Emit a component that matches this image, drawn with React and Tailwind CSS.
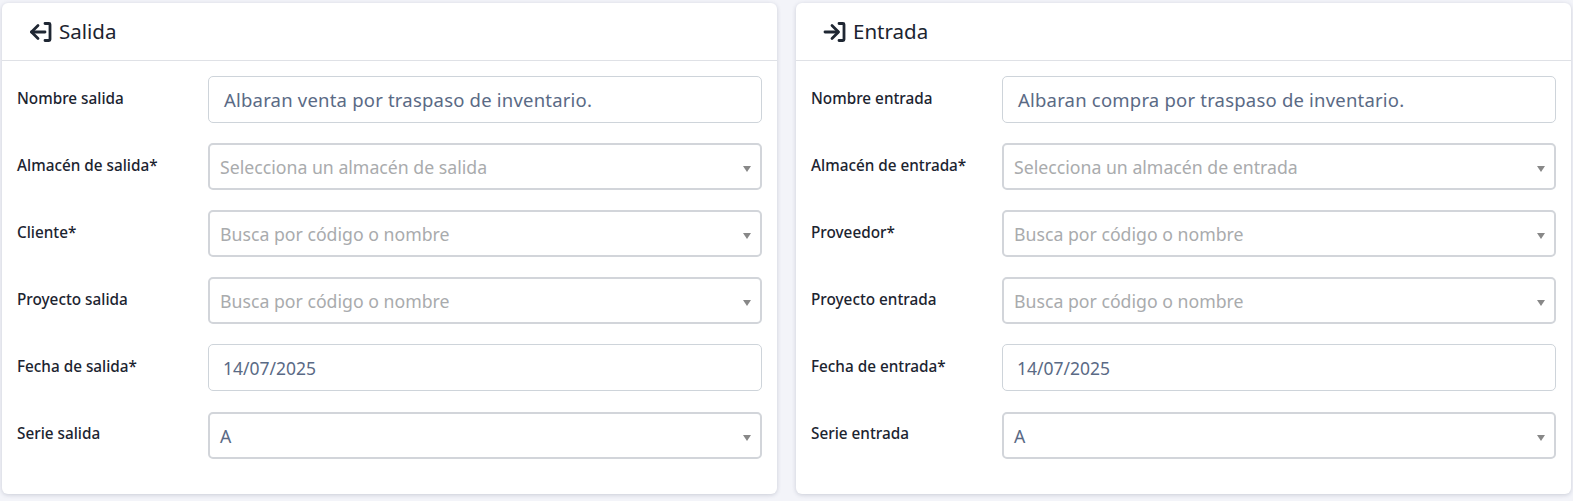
import React from 'react';

const ExitIcon = () => (
  <svg className="w-[24px] h-[24px] text-[#1f2733]" viewBox="0 0 24 24" fill="none" stroke="currentColor" strokeWidth="2.8" strokeLinecap="round" strokeLinejoin="round">
    <path d="M16 3.5h4a1 1 0 0 1 1 1v15a1 1 0 0 1-1 1h-4" />
    <path d="M16 12H2.5" />
    <path d="M9 5.5L2.5 12 9 18.5" />
  </svg>
);

const EnterIcon = () => (
  <svg className="w-[24px] h-[24px] text-[#1f2733]" viewBox="0 0 24 24" fill="none" stroke="currentColor" strokeWidth="2.8" strokeLinecap="round" strokeLinejoin="round">
    <path d="M16 3.5h4a1 1 0 0 1 1 1v15a1 1 0 0 1-1 1h-4" />
    <path d="M2 12h13" />
    <path d="M9 5.5l6.5 6.5L9 18.5" />
  </svg>
);

const TextField = ({ value, size }) => (
  <div className={`h-[47px] flex items-center bg-white border border-[#ced4da] rounded-[5px] text-[#5a6a85] ${size}`}>
    {value}
  </div>
);

const SelectField = ({ value, placeholder }) => (
  <div className="h-[47px] flex items-center justify-between pl-[10px] pr-[9px] bg-white border-2 border-[#d2d5da] rounded-[5px] text-[17.7px]">
    <span className={`pt-[2px] ${placeholder ? 'text-[#a9abad]' : 'text-[#5a6a85]'}`}>{value}</span>
    <span className="w-0 h-0 mt-[5px] border-l-[4px] border-r-[4px] border-t-[6px] border-l-transparent border-r-transparent border-t-[#888888]"></span>
  </div>
);

const Row = ({ label, last, children }) => (
  <div className={`grid grid-cols-[191px_554px] ${last ? 'h-[68px]' : 'h-[67px]'}`}>
    <label className="pt-[8px] text-[15.3px] font-medium leading-[28px] text-[#1c2430]">{label}</label>
    <div className={last ? 'pt-[1px]' : ''}>{children}</div>
  </div>
);

const Card = ({ icon, title, rows }) => (
  <div className="h-[491px] bg-white rounded-[6px] shadow-[0_1px_4px_rgba(60,70,100,0.22)]">
    <div className="h-[58px] flex items-center gap-[6px] pl-[27px] border-b border-[#dfe1e6]">
      {icon}
      <h3 className="text-[20.5px] text-[#1c2430]">{title}</h3>
    </div>
    <div className="pt-[15px] px-[15px]">
      {rows.map((row, i) => (
        <Row key={row.label} label={row.label} last={i === rows.length - 1}>
          {row.type === 'text' ? (
            <TextField value={row.value} size="pl-[15px] text-[18.5px] tracking-[0.2px]" />
          ) : row.type === 'date' ? (
            <TextField value={row.value} size="pl-[14px] pt-[2px] text-[17.5px]" />
          ) : (
            <SelectField value={row.value} placeholder={row.placeholder} />
          )}
        </Row>
      ))}
    </div>
  </div>
);

const salida = [
  { label: 'Nombre salida', type: 'text', value: 'Albaran venta por traspaso de inventario.' },
  { label: 'Almacén de salida*', type: 'select', value: 'Selecciona un almacén de salida', placeholder: true },
  { label: 'Cliente*', type: 'select', value: 'Busca por código o nombre', placeholder: true },
  { label: 'Proyecto salida', type: 'select', value: 'Busca por código o nombre', placeholder: true },
  { label: 'Fecha de salida*', type: 'date', value: '14/07/2025' },
  { label: 'Serie salida', type: 'select', value: 'A' },
];

const entrada = [
  { label: 'Nombre entrada', type: 'text', value: 'Albaran compra por traspaso de inventario.' },
  { label: 'Almacén de entrada*', type: 'select', value: 'Selecciona un almacén de entrada', placeholder: true },
  { label: 'Proveedor*', type: 'select', value: 'Busca por código o nombre', placeholder: true },
  { label: 'Proyecto entrada', type: 'select', value: 'Busca por código o nombre', placeholder: true },
  { label: 'Fecha de entrada*', type: 'date', value: '14/07/2025' },
  { label: 'Serie entrada', type: 'select', value: 'A' },
];

const App = () => {
  return (
    <div className="min-h-screen bg-[#f3f4f9] pt-[3px] pl-[2px] font-['Noto_Sans','Lato',sans-serif]">
      <div className="grid grid-cols-[775px_775px] gap-[19px]">
        <Card icon={<ExitIcon />} title="Salida" rows={salida} />
        <Card icon={<EnterIcon />} title="Entrada" rows={entrada} />
      </div>
    </div>
  );
};

export default App;
